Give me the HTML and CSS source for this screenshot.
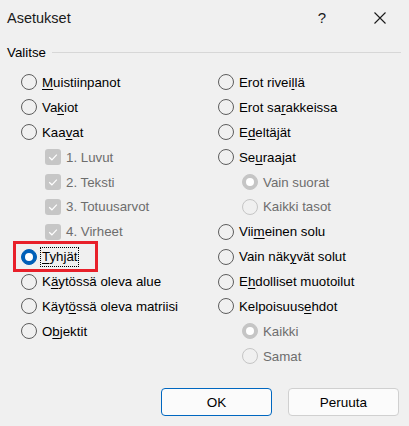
FILE: index.html
```html
<!DOCTYPE html>
<html lang="fi">
<head>
<meta charset="utf-8">
<title>Asetukset</title>
<link rel="stylesheet" href="styles.css">
</head>
<body>
<div class="dialog">
  <header class="titlebar">
    <span class="title">Asetukset</span>
    <span class="help">?</span>
    <svg class="close" width="12" height="12" viewBox="0 0 12 12" aria-label="Sulje">
      <path d="M0.5 0.5 L11.5 11.5 M11.5 0.5 L0.5 11.5" stroke="#1a1a1a" stroke-width="1.1" fill="none"/>
    </svg>
  </header>

  <section class="group">
    <div class="legend"><span>Valitse</span><span class="rule"></span></div>
    <div class="columns">
      <div class="col">
        <div class="row"><span class="radio"></span><span><u>M</u>uistiinpanot</span></div>
        <div class="row"><span class="radio"></span><span>Va<u>k</u>iot</span></div>
        <div class="row"><span class="radio"></span><span>Kaa<u>v</u>at</span></div>
        <div class="row sub dis"><span class="check"><svg width="16" height="16" viewBox="0 0 16 16"><path d="M4.2 8.3 L6.9 10.8 L11.8 5.6" stroke="#fff" stroke-width="1.2" fill="none"/></svg></span><span>1. Luvut</span></div>
        <div class="row sub dis"><span class="check"><svg width="16" height="16" viewBox="0 0 16 16"><path d="M4.2 8.3 L6.9 10.8 L11.8 5.6" stroke="#fff" stroke-width="1.2" fill="none"/></svg></span><span>2. Teksti</span></div>
        <div class="row sub dis"><span class="check"><svg width="16" height="16" viewBox="0 0 16 16"><path d="M4.2 8.3 L6.9 10.8 L11.8 5.6" stroke="#fff" stroke-width="1.2" fill="none"/></svg></span><span>3. Totuusarvot</span></div>
        <div class="row sub dis"><span class="check"><svg width="16" height="16" viewBox="0 0 16 16"><path d="M4.2 8.3 L6.9 10.8 L11.8 5.6" stroke="#fff" stroke-width="1.2" fill="none"/></svg></span><span>4. Virheet</span></div>
        <div class="row marked"><span class="radio on"></span><span class="focus"><u>T</u>yhjät</span><span class="callout"></span></div>
        <div class="row"><span class="radio"></span><span>K<u>ä</u>ytössä oleva alue</span></div>
        <div class="row"><span class="radio"></span><span>Käyt<u>ö</u>ssä oleva matriisi</span></div>
        <div class="row"><span class="radio"></span><span>O<u>b</u>jektit</span></div>
      </div>
      <div class="col">
        <div class="row"><span class="radio"></span><span>Erot rivei<u>l</u>lä</span></div>
        <div class="row"><span class="radio"></span><span>Erot sa<u>r</u>akkeissa</span></div>
        <div class="row"><span class="radio"></span><span>E<u>d</u>eltäjät</span></div>
        <div class="row"><span class="radio"></span><span>Se<u>u</u>raajat</span></div>
        <div class="row sub dis"><span class="radio on"></span><span>Vain suorat</span></div>
        <div class="row sub dis"><span class="radio"></span><span>Kaikki tasot</span></div>
        <div class="row"><span class="radio"></span><span>Vii<u>m</u>einen solu</span></div>
        <div class="row"><span class="radio"></span><span>Vain näk<u>y</u>vät solut</span></div>
        <div class="row"><span class="radio"></span><span>E<u>h</u>dolliset muotoilut</span></div>
        <div class="row"><span class="radio"></span><span>Kelpoisuus<u>e</u>hdot</span></div>
        <div class="row sub dis"><span class="radio on"></span><span>Kaikki</span></div>
        <div class="row sub dis"><span class="radio"></span><span>Samat</span></div>
      </div>
    </div>
  </section>

  <footer class="actions">
    <button class="btn primary">OK</button>
    <button class="btn">Peruuta</button>
  </footer>
</div>
</body>
</html>
```

FILE: styles.css
```css
* { box-sizing: border-box; }

html, body {
  margin: 0;
  background: #f0f0f0;
}

body {
  font-family: "Liberation Sans", Arial, sans-serif;
  font-size: 13.3px;
  color: #000;
}

.dialog {
  width: 409px;
  height: 426px;
  display: flex;
  flex-direction: column;
  overflow: hidden;
}

/* title bar */
.titlebar {
  height: 35px;
  display: flex;
  align-items: center;
  padding-left: 7px;
  padding-right: 23px;
}

.title {
  flex: 1;
  font-size: 14.5px;
  color: #1a1a1a;
}

.help {
  font-size: 15px;
  margin-right: 48px;
  color: #1a1a1a;
}

.close { display: block; }

/* group box */
.legend {
  margin-top: 7px;
  height: 20px;
  display: flex;
  align-items: center;
  gap: 6px;
  padding: 0 8px 0 7px;
}

.rule {
  flex: 1;
  height: 1px;
  background: #d7d7d7;
  margin-top: 1px;
}

.columns {
  margin-top: 8px;
  padding-left: 21px;
  display: grid;
  grid-template-columns: 197px 1fr;
}

.row {
  position: relative;
  height: 24.9px;
  display: flex;
  align-items: center;
  gap: 5px;
  white-space: nowrap;
}

.row.sub { padding-left: 24px; }
.row.dis { color: #6d6d6d; }

u {
  text-decoration: underline;
  text-decoration-thickness: 1px;
  text-underline-offset: 2px;
}

/* radio buttons */
.radio {
  flex: none;
  width: 16px;
  height: 16px;
  border: 1px solid #5d5d5d;
  border-radius: 50%;
  display: grid;
  place-items: center;
}

.radio.on {
  background: #005fb8;
  border-color: #005fb8;
}

.radio.on::after {
  content: "";
  width: 8px;
  height: 8px;
  border-radius: 50%;
  background: #fff;
}

.dis .radio { border-color: #c5c5c5; }
.dis .radio.on { background: #c5c5c5; }

/* checkboxes */
.check {
  flex: none;
  width: 16px;
  height: 16px;
  border-radius: 3px;
  background: #c6c6c6;
}

.check svg { display: block; }

/* keyboard focus and callout */
.focus {
  border: 1px dotted #000;
  padding: 0 1px;
  margin-left: -2px;
  line-height: 18px;
}

.callout {
  position: absolute;
  left: -8px;
  top: -3px;
  width: 85px;
  height: 31px;
  border: 3px solid #e8202a;
}

/* buttons */
.actions {
  margin-top: auto;
  display: flex;
  justify-content: flex-end;
  gap: 16px;
  padding: 0 10px 10px 0;
}

.btn {
  width: 111px;
  height: 28px;
  font: inherit;
  font-size: 13.5px;
  color: #000;
  background: #fbfbfb;
  border: 1px solid #d0d0d0;
  border-radius: 4px;
}

.btn.primary {
  border-color: #0067c0;
}
```
